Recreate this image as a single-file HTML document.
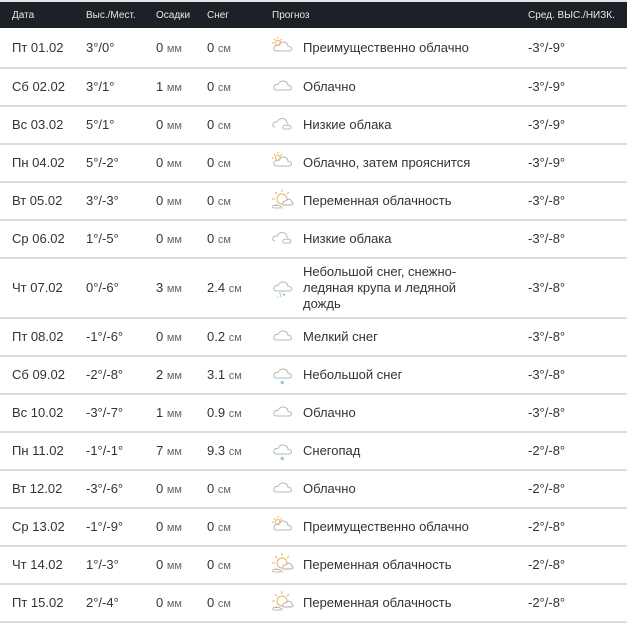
<!DOCTYPE html>
<html><head><meta charset="utf-8">
<style>
*{margin:0;padding:0;box-sizing:border-box}
body{width:627px;height:623px;background:#fff;position:relative;overflow:hidden;font-family:"Liberation Sans",Arial,sans-serif;color:#333}
.top{position:absolute;left:0;top:0;width:627px;height:2px;background:#e5e5e5}
.hd{position:absolute;left:0;top:2px;width:627px;height:26px;background:#1d2027;color:#e8e8e8;font-size:10px}
.hd span{position:absolute;top:8px}
.sep{position:absolute;left:0;width:627px;height:2px;background:#dcdcdc}
.c{position:absolute;font-size:13px;line-height:16px;white-space:nowrap}
.u{font-size:11px;color:#666}
svg{position:absolute}
</style></head><body>
<div class="top"></div>
<div class="hd">
<span style="left:12px">Дата</span>
<span style="left:86px">Выс./Мест.</span>
<span style="left:156px">Осадки</span>
<span style="left:207px">Снег</span>
<span style="left:272px">Прогноз</span>
<span style="left:528px">Сред. ВЫС./НИЗК.</span>
</div>
<div id="rows"></div>
<script>
(function(){
var cloud='<path d="M6 16 Q2 16 3 12.5 Q4 10 7 10.5 Q8.5 6.5 13 7 Q17 8 17 11.5 Q21 11.5 20.5 14.5 Q20 16 18 16 Z" fill="#fff" stroke="#b9b9b9" stroke-width="1"/>';
var sunsmall='<g stroke="#f0b25a" stroke-width="1"><circle cx="7" cy="8" r="2.5" fill="none"/><line x1="7" y1="2" x2="7" y2="4"/><line x1="1" y1="8" x2="3" y2="8"/><line x1="3" y1="4" x2="4.5" y2="5.5"/><line x1="11" y1="4" x2="9.5" y2="5.5"/></g>';
var sunbig='<g stroke="#f0b25a" stroke-width="1" fill="none"><circle cx="11" cy="11" r="5"/><line x1="11" y1="1" x2="11" y2="4"/><line x1="11" y1="18" x2="11" y2="21"/><line x1="1" y1="11" x2="4" y2="11"/><line x1="4" y1="4" x2="6" y2="6"/><line x1="18" y1="4" x2="16" y2="6"/><line x1="4" y1="18" x2="6" y2="16"/></g><path d="M13 17 Q11 17 12 14.5 Q13 12.5 15 13 Q16.5 10.5 19 11.5 Q21 12.5 20.5 14 Q22.5 14.5 22 16 Q21.5 17 20 17 Z" fill="#fff" stroke="#aaa" stroke-width="0.9"/><path d="M3 20 Q1 20 2 18 Q3 17 5 17.5 L9 17.5 Q10 19 8.5 20 Z" fill="#fff" stroke="#aaa" stroke-width="0.8"/>';
var low='<path d="M4 15 Q1 15 2 12 Q3 9.5 6 10 Q7.5 6 12 6.5 Q16 7.5 16 11 L17 12" fill="none" stroke="#b9b9b9" stroke-width="1"/><path d="M13 17 Q11 17 12 14.5 Q13.5 12.5 16 13.5 Q19 12.5 20 15 Q20 17 18 17 Z" fill="#fff" stroke="#b9b9b9" stroke-width="1"/>';
var snow=cloud+'<text x="9" y="25" font-size="9" fill="#3aa6d8" font-family="DejaVu Sans">*</text>';
var sleet=cloud+'<text x="6" y="22" font-size="6" fill="#3aa6d8" font-family="Liberation Sans">,\'/ •</text>';
var icons={pc:cloud+sunsmall,c:cloud,l:low,s:sunbig,sn:snow,sl:sleet};
var d=[
["Пт 01.02","3°/0°","0","0","pc","Преимущественно облачно","-3°/-9°"],
["Сб 02.02","3°/1°","1","0","c","Облачно","-3°/-9°"],
["Вс 03.02","5°/1°","0","0","l","Низкие облака","-3°/-9°"],
["Пн 04.02","5°/-2°","0","0","pc","Облачно, затем прояснится","-3°/-9°"],
["Вт 05.02","3°/-3°","0","0","s","Переменная облачность","-3°/-8°"],
["Ср 06.02","1°/-5°","0","0","l","Низкие облака","-3°/-8°"],
["Чт 07.02","0°/-6°","3","2.4","sl","Небольшой снег, снежно-<br>ледяная крупа и ледяной<br>дождь","-3°/-8°"],
["Пт 08.02","-1°/-6°","0","0.2","c","Мелкий снег","-3°/-8°"],
["Сб 09.02","-2°/-8°","2","3.1","sn","Небольшой снег","-3°/-8°"],
["Вс 10.02","-3°/-7°","1","0.9","c","Облачно","-3°/-8°"],
["Пн 11.02","-1°/-1°","7","9.3","sn","Снегопад","-2°/-8°"],
["Вт 12.02","-3°/-6°","0","0","c","Облачно","-2°/-8°"],
["Ср 13.02","-1°/-9°","0","0","pc","Преимущественно облачно","-2°/-8°"],
["Чт 14.02","1°/-3°","0","0","s","Переменная облачность","-2°/-8°"],
["Пт 15.02","2°/-4°","0","0","s","Переменная облачность","-2°/-8°"]];
var seps=[28,67,105,143,181,219,257,317,355,393,431,469,507,545,583,621];
var h='';
for(var i=0;i<15;i++){
 var t0=seps[i]+(i==0?0:2), bot=seps[i+1]; var cy=(t0+bot)/2; var ty=cy-8;
 var r=d[i];
 h+='<div class="c" style="left:12px;top:'+ty+'px">'+r[0]+'</div>';
 h+='<div class="c" style="left:86px;top:'+ty+'px">'+r[1]+'</div>';
 h+='<div class="c" style="left:156px;top:'+ty+'px">'+r[2]+' <span class="u">мм</span></div>';
 h+='<div class="c" style="left:207px;top:'+ty+'px">'+r[3]+' <span class="u">см</span></div>';
 h+='<svg width="26" height="26" viewBox="0 0 24 26" style="left:270px;top:'+(cy-13)+'px">'+icons[r[4]]+'</svg>';
 var lines=r[5].split('<br>').length;
 h+='<div class="c" style="left:303px;top:'+(cy-lines*8)+'px">'+r[5]+'</div>';
 h+='<div class="c" style="left:528px;top:'+ty+'px">'+r[6]+'</div>';
 h+='<div class="sep" style="top:'+bot+'px"></div>';
}
document.getElementById('rows').innerHTML=h;
})();
</script>
</body></html>
